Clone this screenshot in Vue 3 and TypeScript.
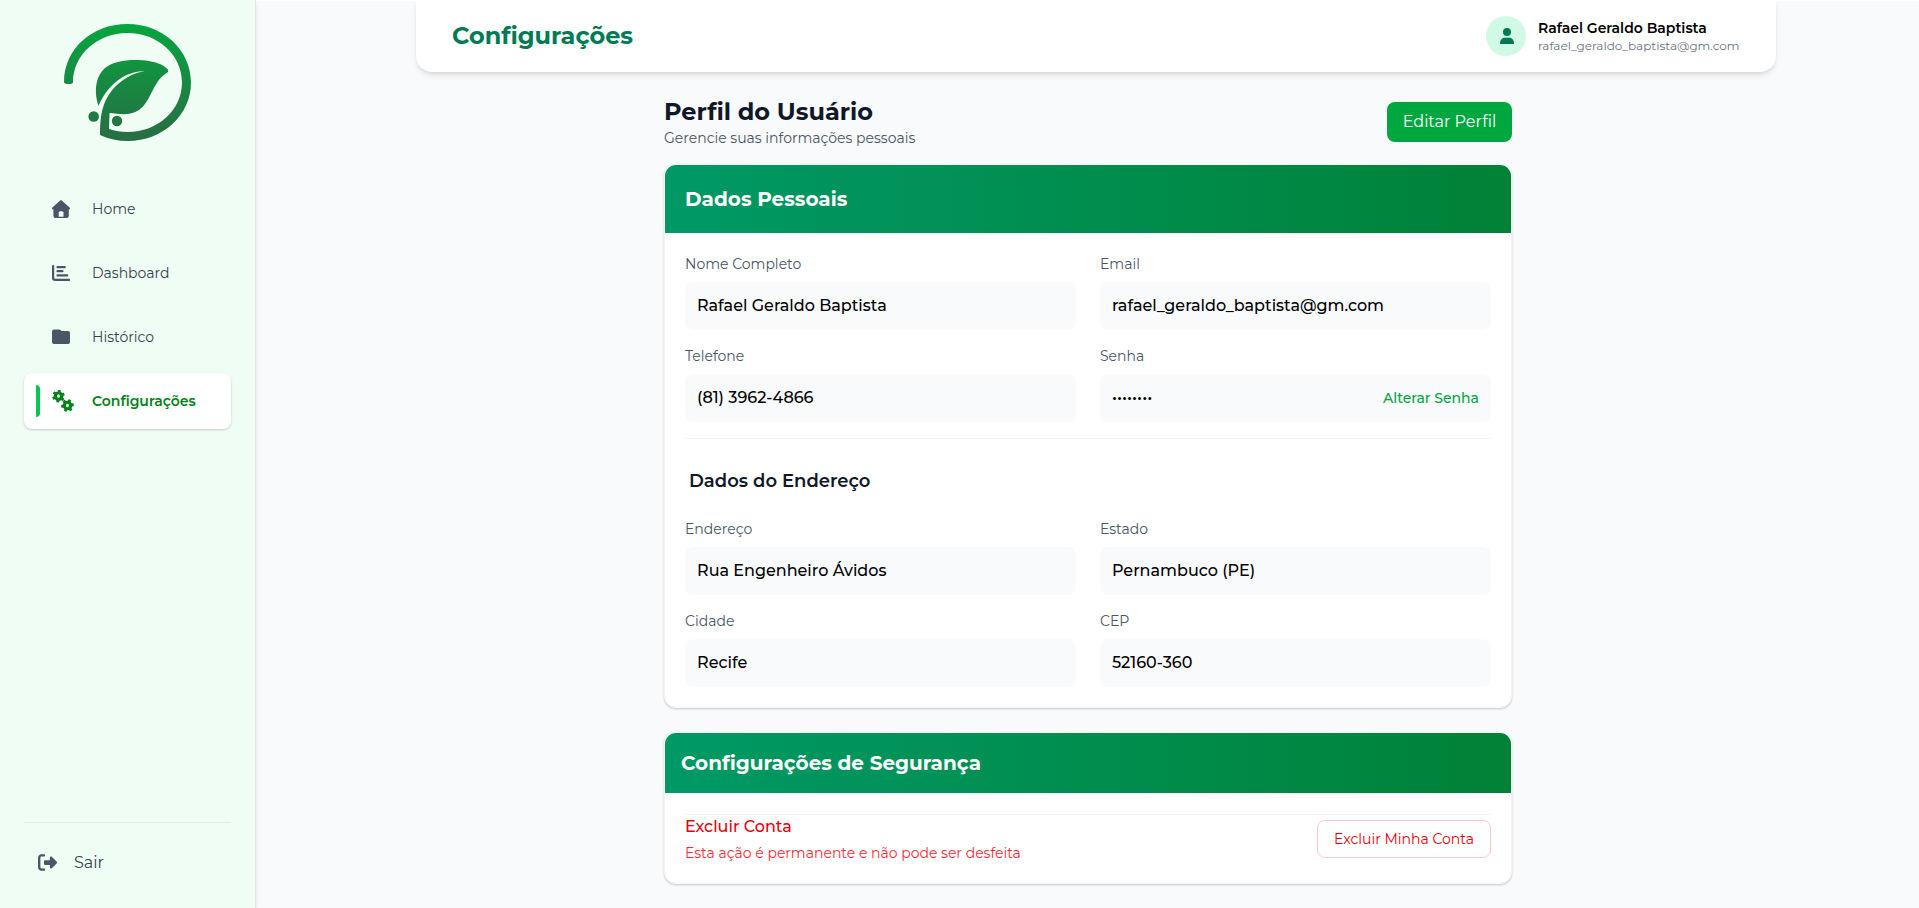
<script setup lang="ts">
interface NavItem { id: string; label: string; active?: boolean }
interface Field { label: string; value: string; action?: string }

const nav: NavItem[] = [
  { id: 'home', label: 'Home' },
  { id: 'dashboard', label: 'Dashboard' },
  { id: 'historico', label: 'Histórico' },
  { id: 'config', label: 'Configurações', active: true },
]
const personal: Field[] = [
  { label: 'Nome Completo', value: 'Rafael Geraldo Baptista' },
  { label: 'Email', value: 'rafael_geraldo_baptista@gm.com' },
  { label: 'Telefone', value: '(81) 3962-4866' },
  { label: 'Senha', value: '••••••••', action: 'Alterar Senha' },
]
const address: Field[] = [
  { label: 'Endereço', value: 'Rua Engenheiro Ávidos' },
  { label: 'Estado', value: 'Pernambuco (PE)' },
  { label: 'Cidade', value: 'Recife' },
  { label: 'CEP', value: '52160-360' },
]
</script>

<template>
  <div class="layout">
    <aside class="sidebar">
      <svg class="logo" viewBox="0 0 180 150" width="180" height="150">
        <defs>
          <linearGradient id="leafGradient" gradientUnits="userSpaceOnUse" x1="0" y1="14" x2="0" y2="131">
            <stop offset="0" stop-color="#06a63f" />
            <stop offset="1" stop-color="#286d44" />
          </linearGradient>
        </defs>
        <g fill="url(#leafGradient)">
          <path d="M24 72C24 40 51 14 87.500 14C123 14 151 40 151 72.500C151 105 123 131 87.500 131C78 131 69 129 60 125C60 106 62 92 73 79C81 70 92 63 105 61C84 61 67 76 58.500 96C53 79 57 65 65 58C76 48 106 48 120 54Q125 56 128 59.500Q129 62 126 63.500C113 71 111 92 99 100C90 106 80 104 69.500 103L69 119C75 121 81 122 87.500 122C118 122 142 100 142 72.500C142 45 118 23 87.500 23C57 23 33 45 33 72Q33 74 28.500 74Q24 74 24 72Z" />
          <circle cx="53.700" cy="106.500" r="5.300" />
          <circle cx="77" cy="111" r="5.200" />
        </g>
      </svg>
      <nav class="nav">
        <a v-for="item in nav" :key="item.id" class="nav-item" :class="{ active: item.active }">
          <span v-if="item.active" class="bar"></span>
          <svg v-if="item.id === 'home'" class="icon" viewBox="0 0 18 18" fill="currentColor">
            <path fill-rule="evenodd" d="M8.200.4a1.200 1.200 0 0 1 1.600 0l7.800 7.200c.8.800.4 1.700-.4 1.700h-.4v6.500A2.200 2.200 0 0 1 14.600 18H3.600a2.200 2.200 0 0 1-2.200-2.200V9.300H.9C0 9.300-.4 8.400.4 7.600ZM6.700 16.800h4.800v-4a1.500 1.500 0 0 0-1.500-1.500H8.200a1.500 1.500 0 0 0-1.500 1.500Z" />
          </svg>
          <svg v-else-if="item.id === 'dashboard'" class="icon" viewBox="0 0 18 18" fill="none" stroke="currentColor" stroke-width="2.200" stroke-linecap="round">
            <path d="M1.100 2v11.800Q1.100 15.900 3.200 15.900H17M5.500 3.200h7.300M5.500 7.200h5M5.500 11.400h9.700" />
          </svg>
          <svg v-else-if="item.id === 'historico'" class="icon" viewBox="0 0 18 18" fill="currentColor">
            <path d="M2 1.500H7.300Q8 1.500 8.500 2L9.400 3H16Q18 3 18 5V14Q18 16 16 16H2Q0 16 0 14V3.500Q0 1.500 2 1.500Z" />
          </svg>
          <svg v-else class="icon gears" viewBox="0 0 22 22">
            <g v-for="gear in [{ x: 6.5, y: 6.2, r: 8 }, { x: 15.5, y: 15.5, r: 22 }]" :key="gear.x" :transform="`translate(${gear.x} ${gear.y}) rotate(${gear.r})`">
              <circle r="3.200" fill="none" stroke="currentColor" stroke-width="3.200" />
              <rect v-for="n in 6" :key="n" x="-1.450" y="-6.300" width="2.900" height="3" rx=".6" fill="currentColor" :transform="`rotate(${n * 60})`" />
            </g>
          </svg>
          <span class="nav-label">{{ item.label }}</span>
        </a>
      </nav>
      <div class="exit">
        <svg class="icon" viewBox="0 0 512 512" fill="currentColor">
          <path d="M377.900 105.900L500.700 228.700c7.200 7.200 11.300 17.100 11.300 27.300s-4.100 20.100-11.300 27.300L377.900 406.100c-6.400 6.400-15 9.900-24 9.900c-18.700 0-33.900-15.200-33.900-33.900V320H192c-17.700 0-32-14.300-32-32V224c0-17.700 14.300-32 32-32H320V129.900c0-18.700 15.200-33.900 33.900-33.900c9 0 17.600 3.600 24 9.900zM160 96H96c-17.700 0-32 14.300-32 32V384c0 17.700 14.300 32 32 32h64c17.700 0 32 14.300 32 32s-14.300 32-32 32H96c-53 0-96-43-96-96V128C0 75 43 32 96 32h64c17.700 0 32 14.300 32 32s-14.300 32-32 32z" />
        </svg>
        <span class="exit-label">Sair</span>
      </div>
    </aside>

    <main class="main">
      <header class="topbar">
        <h1>Configurações</h1>
        <div class="user">
          <div class="avatar">
            <svg viewBox="0 0 14 16" width="14" height="16" fill="currentColor">
              <circle cx="7" cy="4" r="4" />
              <path d="M0 15.300C0 11.500 2.500 9.700 5 9.700H9C11.500 9.700 14 11.500 14 15.300Q14 16 13.300 16H.7Q0 16 0 15.300Z" />
            </svg>
          </div>
          <div class="who">
            <span class="name">Rafael Geraldo Baptista</span>
            <span class="mail">rafael_geraldo_baptista@gm.com</span>
          </div>
        </div>
      </header>

      <div class="content">
        <div class="intro">
          <div>
            <h2>Perfil do Usuário</h2>
            <p>Gerencie suas informações pessoais</p>
          </div>
          <button class="edit">Editar Perfil</button>
        </div>

        <section class="card">
          <div class="card-head tall"><h3>Dados Pessoais</h3></div>
          <div class="card-body">
            <div class="fields">
              <div v-for="f in personal" :key="f.label">
                <label>{{ f.label }}</label>
                <div class="value">
                  <span>{{ f.value }}</span>
                  <a v-if="f.action" class="link">{{ f.action }}</a>
                </div>
              </div>
            </div>
            <h4>Dados do Endereço</h4>
            <div class="fields">
              <div v-for="f in address" :key="f.label">
                <label>{{ f.label }}</label>
                <div class="value"><span>{{ f.value }}</span></div>
              </div>
            </div>
          </div>
        </section>

        <section class="card">
          <div class="card-head short"><h3>Configurações de Segurança</h3></div>
          <div class="card-body">
            <div class="danger">
              <div>
                <div class="danger-title">Excluir Conta</div>
                <div class="danger-text">Esta ação é permanente e não pode ser desfeita</div>
              </div>
              <button class="delete">Excluir Minha Conta</button>
            </div>
          </div>
        </section>
      </div>
    </main>
  </div>
</template>

<style>
body { margin: 0; background: #fff; }
</style>

<style scoped>
* { box-sizing: border-box; }
h1, h2, h3, h4, p { margin: 0; }
button { font: inherit; border: 0; padding: 0; white-space: nowrap; }
.layout { display: flex; height: 908px; overflow: hidden; font-family: Montserrat, Inter, "Open Sans", sans-serif; font-size: 16px; line-height: 24px; white-space: nowrap; }
.sidebar { width: 256px; flex: none; background: #f0fdf4; border-right: 1px solid #e5e7eb; box-shadow: 0 4px 6px -1px rgba(0,0,0,.1), 0 2px 4px -2px rgba(0,0,0,.1); display: flex; flex-direction: column; padding: 10px 24px 12px; z-index: 1; }
.logo { margin-left: 16px; display: block; flex: none; }
.nav { display: flex; flex-direction: column; gap: 8px; margin-top: 21px; }
.nav-item { display: flex; align-items: center; height: 56px; padding-left: 28px; border-radius: 8px; color: #364153; font-size: 14px; font-weight: 400; }
.icon { width: 18px; height: 18px; flex: none; color: #4a5565; }
.nav-label { margin-left: 22px; }
.nav-item.active { background: #fff; color: #008217; font-weight: 600; padding-left: 12px; box-shadow: 0 1px 3px rgba(0,0,0,.1), 0 1px 2px rgba(0,0,0,.1); }
.bar { width: 4px; height: 32px; background: #00c950; border-radius: 0 4px 4px 0; margin-right: 12px; }
.icon.gears { width: 22px; height: 22px; color: #008217; }
.active .nav-label { margin-left: 18px; }
.exit { margin-top: auto; border-top: 1px solid #e5e7eb; height: 74px; display: flex; align-items: center; padding: 6px 0 0 14px; color: #364153; font-weight: 400; }
.exit .icon { width: 19px; height: 19px; }
.exit-label { margin-left: 17px; }
.main { flex: 1; background: #f9fafb; border-top: 1px solid #fff; }
.topbar { width: 1360px; height: 72px; margin: -1px 0 0 160px; padding: 0 36px; background: #fff; border-radius: 0 0 16px 16px; box-shadow: 0 4px 6px -1px rgba(0,0,0,.1), 0 2px 4px -2px rgba(0,0,0,.1); display: flex; align-items: center; justify-content: space-between; }
h1 { font-size: 24px; line-height: 32px; font-weight: 700; color: #007a55; }
.user { display: flex; align-items: center; gap: 12px; }
.avatar { width: 40px; height: 40px; border-radius: 50%; background: #d0fae5; color: #007a55; display: flex; align-items: center; justify-content: center; }
.avatar svg { margin-left: 1px; }
.who { display: flex; flex-direction: column; width: 202px; }
.name { font-size: 14px; line-height: 20px; font-weight: 600; color: #000; }
.mail { font-size: 12px; line-height: 16px; font-weight: 400; color: #6a7282; }
.content { width: 848px; margin: 24px 0 0 408px; }
.intro { display: flex; justify-content: space-between; align-items: center; height: 52px; }
h2 { font-size: 24px; line-height: 32px; font-weight: 700; color: #101828; }
.intro p { font-size: 14px; line-height: 20px; font-weight: 400; color: #4a5565; }
.edit { width: 125px; height: 40px; border-radius: 8px; background: #00a63e; color: #fff; font-weight: 400; }
.card { margin-top: 16px; border: 1px solid #f3f4f6; border-radius: 12px; background: #fff; overflow: hidden; box-shadow: 0 1px 3px rgba(0,0,0,.1), 0 1px 2px rgba(0,0,0,.1); }
.card + .card { margin-top: 24px; }
.card-head { display: flex; align-items: center; background: linear-gradient(to right in oklab, #009966, #008236); color: #fff; }
.tall { height: 68px; padding-left: 20px; }
.short { height: 60px; padding-left: 16px; }
h3 { font-size: 20px; line-height: 28px; font-weight: 700; }
.card-body { padding: 21px 20px 20px; }
.fields { display: grid; grid-template-columns: 1fr 1fr; gap: 16px 24px; }
.fields label { display: block; font-size: 14px; line-height: 20px; margin: 0 0 8px; font-weight: 400; color: #4a5565; }
.value { height: 48px; border-radius: 8px; background: #f9fafb; padding: 0 12px; display: flex; align-items: center; justify-content: space-between; color: #000; font-weight: 500; }
.link { font-size: 14px; font-weight: 500; color: #00a63e; }
h4 { margin: 16px 0 24px; border-top: 1px solid #f3f4f6; padding: 28px 0 0 4px; font-size: 18px; line-height: 28px; font-weight: 600; color: #101828; }
.danger { border-top: 1px solid #f3f4f6; display: flex; justify-content: space-between; height: 49px; }
.danger-title { font-weight: 500; color: #e7000b; }
.danger-text { font-size: 14px; line-height: 20px; font-weight: 400; color: #fb2c36; margin-top: 4px; }
.delete { width: 174px; height: 38px; margin-top: 5px; border: 1px solid #ffc9c9; border-radius: 8px; background: #fff; color: #e7000b; font-size: 14px; font-weight: 400; }
</style>
